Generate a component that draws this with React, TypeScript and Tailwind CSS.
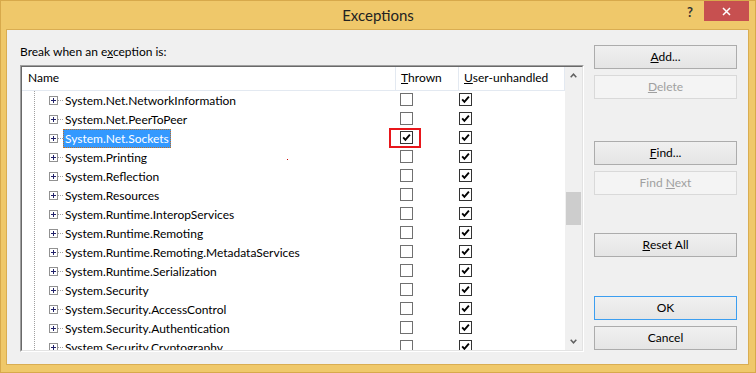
import React from 'react';

const items = [
  'System.Net.NetworkInformation',
  'System.Net.PeerToPeer',
  'System.Net.Sockets',
  'System.Printing',
  'System.Reflection',
  'System.Resources',
  'System.Runtime.InteropServices',
  'System.Runtime.Remoting',
  'System.Runtime.Remoting.MetadataServices',
  'System.Runtime.Serialization',
  'System.Security',
  'System.Security.AccessControl',
  'System.Security.Authentication',
  'System.Security.Cryptography',
];

function Check({ on }: { on: boolean }) {
  return (
    <span
      className={`w-[13px] h-[13px] border bg-white flex items-center justify-center ${
        on ? 'border-[#333333]' : 'border-[#707070]'
      }`}
    >
      {on && (
        <svg width="9" height="9" viewBox="0 0 9 9">
          <path d="M1.2 4.4 L3.4 6.8 L7.9 1.6" fill="none" stroke="#000" strokeWidth="1.9" />
        </svg>
      )}
    </span>
  );
}

function Expander() {
  return (
    <svg width="9" height="9" viewBox="0 0 9 9" className="shrink-0">
      <rect x="0.5" y="0.5" width="8" height="8" fill="#fff" stroke="#919191" />
      <path d="M2 4.5h5M4.5 2v5" stroke="#22226a" />
    </svg>
  );
}

function Btn({
  children,
  disabled,
  isDefault,
  className = '',
}: {
  children: React.ReactNode;
  disabled?: boolean;
  isDefault?: boolean;
  className?: string;
}) {
  const look = disabled
    ? 'border-[#d9d9d9] bg-[#f4f4f4] text-[#a0a0a0]'
    : isDefault
    ? 'border-[#3c9ef0] bg-[linear-gradient(#f0f0f0,#e5e5e5)] text-black'
    : 'border-[#acacac] bg-[linear-gradient(#f0f0f0,#e5e5e5)] text-black';
  return (
    <div className={`h-[24px] border flex items-center justify-center ${look} ${className}`}>{children}</div>
  );
}

export default function App() {
  return (
    <div className="w-[756px] h-[373px] bg-[#efc86a] border border-[#d7a94b] flex flex-col font-['Lato','Liberation_Sans',sans-serif] text-[12px] leading-[16px] text-black select-none">
      {/* title bar */}
      <div className="h-[28px] flex shrink-0">
        <div className="flex-1" />
        <div className="pt-[4px] text-[15px] leading-[20px] text-[#222]">Exceptions</div>
        <div className="flex-1 flex justify-end items-start">
          <span className="mt-[3px] mr-[11px] text-[13px] font-bold leading-[16px] text-[#333]">?</span>
          <div className="w-[45px] h-[20px] mr-[6px] bg-[#c75050] flex items-center justify-center">
            <svg width="9" height="9" viewBox="0 0 9 9">
              <path d="M1 1L8 8M8 1L1 8" stroke="#fff" strokeWidth="1.5" />
            </svg>
          </div>
        </div>
      </div>

      {/* client area */}
      <div className="flex-1 ml-[5px] mr-[6px] mb-[7px] border border-[#d9ad52] bg-[#f0f0f0] flex">
        <div className="pl-[13px] pt-[14px] flex flex-col">
          <div>
            Break when an e<span className="underline">x</span>ception is:
          </div>

          <div className="mt-[5px] w-[564px] border border-t-[#a0a0a0] border-l-[#a0a0a0] border-r-[#ffffff] border-b-[#ffffff]">
            <div className="border border-t-[#696969] border-l-[#696969] border-r-[#e3e3e3] border-b-[#e3e3e3] bg-white flex">
              <div className="w-[543px] flex flex-col">
                <div className="h-[24px] flex border-b border-[#e3e9f1]">
                  <div className="w-[374px] border-r border-[#e3e9f1] pl-[6px] pb-[2px] flex items-center">Name</div>
                  <div className="w-[63px] border-r border-[#e3e9f1] pl-[5px] pb-[2px] flex items-center">
                    <span className="underline">T</span>hrown
                  </div>
                  <div className="w-[106px] border-r border-[#e3e9f1] pl-[5px] pb-[2px] flex items-center">
                    <span className="underline">U</span>ser-unhandled
                  </div>
                </div>

                <div className="h-[259px] overflow-hidden bg-[linear-gradient(to_bottom,#a0a0a0_50%,transparent_50%)] bg-[length:1px_2px] bg-repeat-y bg-[position:12px_0]">
                  {items.map((name, i) => {
                    const sel = i === 2;
                    return (
                      <div key={name} className="relative h-[19px] flex items-center">
                        <div className="w-[374px] h-full flex items-center pl-[27px]">
                          <Expander />
                          <span className="w-[5px] h-px shrink-0 bg-[repeating-linear-gradient(to_right,#a0a0a0_0_1px,transparent_1px_2px)]" />
                          {sel ? (
                            <span className="h-[19px] px-[1px] flex items-center bg-[#3399ff] text-white border border-dotted border-[#c46d1b] whitespace-nowrap">
                              {name}
                            </span>
                          ) : (
                            <span className="px-[2px] whitespace-nowrap">{name}</span>
                          )}
                        </div>
                        <div className="w-[63px] h-full pl-[4px] pt-[2px]">
                          <Check on={sel} />
                        </div>
                        <div className="w-[106px] h-full pt-[2px]">
                          <Check on />
                        </div>
                        {sel && (
                          <span className="absolute left-[367px] top-[-1px] w-[32px] h-[20px] border-2 border-[#e8161b]" />
                        )}
                        {i === 3 && <span className="absolute left-[265px] top-[11px] w-px h-px bg-[#cc0000]" />}
                      </div>
                    );
                  })}
                </div>
              </div>

              {/* scrollbar */}
              <div className="w-[17px] bg-[#f0f0f0] flex flex-col">
                <div className="h-[17px] flex items-center justify-center">
                  <svg width="7" height="5" viewBox="0 0 7 5">
                    <path d="M0.7 4.2 L3.5 1.2 L6.3 4.2" fill="none" stroke="#606060" strokeWidth="1.5" />
                  </svg>
                </div>
                <div className="flex-1 flex flex-col px-[1px]">
                  <div className="h-[108px]" />
                  <div className="h-[33px] bg-[#cdcdcd]" />
                </div>
                <div className="h-[17px] flex items-center justify-center">
                  <svg width="7" height="5" viewBox="0 0 7 5">
                    <path d="M0.7 0.8 L3.5 3.8 L6.3 0.8" fill="none" stroke="#606060" strokeWidth="1.5" />
                  </svg>
                </div>
              </div>
            </div>
          </div>
        </div>

        {/* buttons */}
        <div className="ml-[10px] w-[143px] pt-[15px] flex flex-col">
          <Btn>
            <span className="underline">A</span>dd...
          </Btn>
          <Btn disabled className="mt-[6px]">
            <span className="underline">D</span>elete
          </Btn>
          <Btn className="mt-[42px]">
            <span className="underline">F</span>ind...
          </Btn>
          <Btn disabled className="mt-[6px]">
            Find <span className="underline ml-[3px]">N</span>ext
          </Btn>
          <Btn className="mt-[38px]">
            <span className="underline">R</span>eset All
          </Btn>
          <Btn isDefault className="mt-[39px]">
            OK
          </Btn>
          <Btn className="mt-[6px]">Cancel</Btn>
        </div>
      </div>
    </div>
  );
}
